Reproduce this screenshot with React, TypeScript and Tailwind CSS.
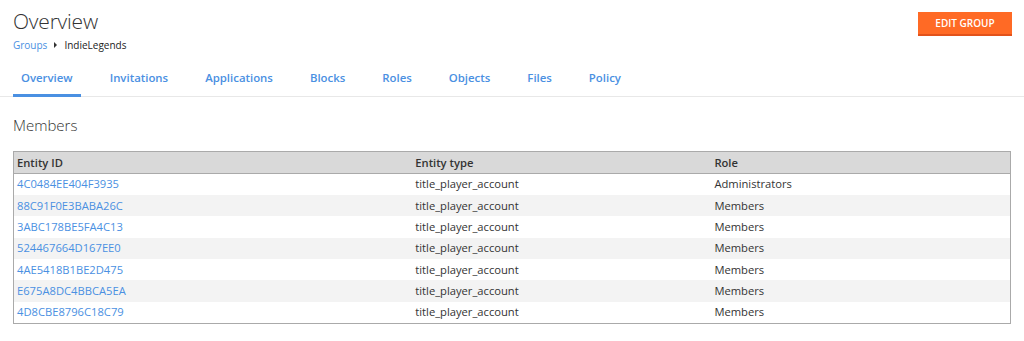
import React from 'react';

const tabs = ['Overview', 'Invitations', 'Applications', 'Blocks', 'Roles', 'Objects', 'Files', 'Policy'];

const members = [
  { id: '4C0484EE404F3935', type: 'title_player_account', role: 'Administrators' },
  { id: '88C91F0E3BABA26C', type: 'title_player_account', role: 'Members' },
  { id: '3ABC178BE5FA4C13', type: 'title_player_account', role: 'Members' },
  { id: '524467664D167EE0', type: 'title_player_account', role: 'Members' },
  { id: '4AE5418B1BE2D475', type: 'title_player_account', role: 'Members' },
  { id: 'E675A8DC4BBCA5EA', type: 'title_player_account', role: 'Members' },
  { id: '4D8CBE8796C18C79', type: 'title_player_account', role: 'Members' },
];

const App = () => {
  return (
    <div className="w-[1024px] h-[341px] bg-white font-['Open_Sans',sans-serif] text-[#333]">
      <div className="flex justify-between px-[13px]">
        <div>
          <h1 className="text-[21px] font-light leading-[30px] pt-[6px] text-[#333] tracking-[-0.2px]">Overview</h1>
          <div className="flex items-center text-[10px] leading-[14px] mt-[2px]">
            <span className="text-[#4a90e2]">Groups</span>
            <span className="mx-[7px] w-0 h-0 border-y-[3px] border-y-transparent border-l-[3px] border-l-[#333]" />
            <span className="text-[#222]">IndieLegends</span>
          </div>
        </div>
        <button className="mt-[12px] mr-[-1px] w-[94px] h-[24px] bg-[#ff6a25] border-b-2 border-[#e2521b] text-white text-[10px] font-semibold uppercase">
          Edit Group
        </button>
      </div>

      <div className="flex px-[13px] mt-[10px] border-b border-[#e8e8e8] h-[35px]">
        {tabs.map((t, i) => (
          <div
            key={t}
            className={`px-[8px] mr-[21px] text-[11.4px] font-semibold text-[#4a90e2] pt-[7px] ${
              i === 0 ? 'border-b-[3px] border-[#4a90e2] -mb-[1px]' : ''
            }`}
          >
            {t}
          </div>
        ))}
      </div>

      <div className="px-[13px]">
        <h2 className="text-[15px] font-light mt-[18px] leading-[20px] text-[#333]">Members</h2>
        <table className="w-full mt-[16px] border border-[#aaa] border-collapse text-[11.2px] leading-[20px]">
          <thead>
            <tr className="bg-[#d9d9d9] border-b border-[#aaa] text-[#333] text-left">
              <th className="w-[40%] px-[3px] pt-[1px] h-[22px] font-semibold">Entity ID</th>
              <th className="w-[30%] px-[3px] font-semibold">Entity type</th>
              <th className="w-[30%] px-[3px] font-semibold">Role</th>
            </tr>
          </thead>
          <tbody>
            {members.map((m, i) => (
              <tr key={m.id} className={i % 2 === 1 ? 'bg-[#f3f3f3]' : 'bg-white'}>
                <td className="px-[3px] h-[21.4px] text-[#4a90e2]">{m.id}</td>
                <td className="px-[3px] text-[#333]">{m.type}</td>
                <td className="px-[3px] text-[#333]">{m.role}</td>
              </tr>
            ))}
          </tbody>
        </table>
      </div>
    </div>
  );
};

export default App;
